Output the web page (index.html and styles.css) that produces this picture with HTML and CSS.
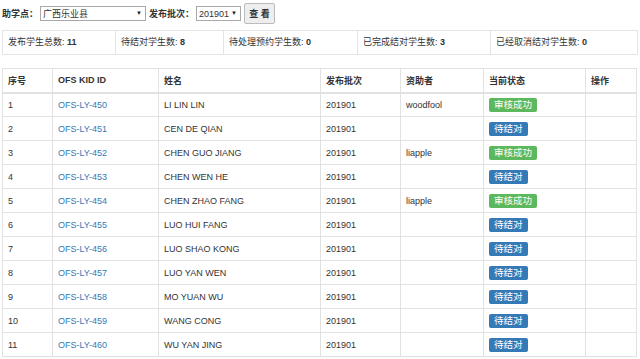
FILE: index.html
```html
<!DOCTYPE html>
<html lang="zh-CN">
<head>
<meta charset="UTF-8">
<meta name="viewport" content="width=device-width, initial-scale=1.0">
<title>学生结对列表</title>
<link rel="stylesheet" href="styles.css">
</head>
<body>

<div class="filter-bar">
    <label class="filter-label">助学点：</label>
    <span class="select-wrap site-select">
        <select class="filter-select">
            <option>广西乐业县</option>
        </select>
    </span>
    <label class="filter-label">发布批次：</label>
    <span class="select-wrap batch-select">
        <select class="filter-select">
            <option>201901</option>
        </select>
    </span>
    <button class="view-button">查 看</button>
</div>

<div class="stats">
    <div class="stat stat-total">发布学生总数: <b>11</b></div>
    <div class="stat stat-waiting">待结对学生数: <b>8</b></div>
    <div class="stat stat-pending">待处理预约学生数: <b>0</b></div>
    <div class="stat stat-done">已完成结对学生数: <b>3</b></div>
    <div class="stat stat-cancel">已经取消结对学生数: <b>0</b></div>
</div>

<table class="kid-table">
    <thead>
        <tr>
            <th class="col-no">序号</th>
            <th class="col-id">OFS KID ID</th>
            <th class="col-name">姓名</th>
            <th class="col-batch">发布批次</th>
            <th class="col-sponsor">资助者</th>
            <th class="col-status">当前状态</th>
            <th class="col-op">操作</th>
        </tr>
    </thead>
    <tbody>
        <tr><td>1</td><td><a href="#">OFS-LY-450</a></td><td>LI LIN LIN</td><td>201901</td><td>woodfool</td><td><span class="label label-success">审核成功</span></td><td></td></tr>
        <tr><td>2</td><td><a href="#">OFS-LY-451</a></td><td>CEN DE QIAN</td><td>201901</td><td></td><td><span class="label label-primary">待结对</span></td><td></td></tr>
        <tr><td>3</td><td><a href="#">OFS-LY-452</a></td><td>CHEN GUO JIANG</td><td>201901</td><td>liapple</td><td><span class="label label-success">审核成功</span></td><td></td></tr>
        <tr><td>4</td><td><a href="#">OFS-LY-453</a></td><td>CHEN WEN HE</td><td>201901</td><td></td><td><span class="label label-primary">待结对</span></td><td></td></tr>
        <tr><td>5</td><td><a href="#">OFS-LY-454</a></td><td>CHEN ZHAO FANG</td><td>201901</td><td>liapple</td><td><span class="label label-success">审核成功</span></td><td></td></tr>
        <tr><td>6</td><td><a href="#">OFS-LY-455</a></td><td>LUO HUI FANG</td><td>201901</td><td></td><td><span class="label label-primary">待结对</span></td><td></td></tr>
        <tr><td>7</td><td><a href="#">OFS-LY-456</a></td><td>LUO SHAO KONG</td><td>201901</td><td></td><td><span class="label label-primary">待结对</span></td><td></td></tr>
        <tr><td>8</td><td><a href="#">OFS-LY-457</a></td><td>LUO YAN WEN</td><td>201901</td><td></td><td><span class="label label-primary">待结对</span></td><td></td></tr>
        <tr><td>9</td><td><a href="#">OFS-LY-458</a></td><td>MO YUAN WU</td><td>201901</td><td></td><td><span class="label label-primary">待结对</span></td><td></td></tr>
        <tr><td>10</td><td><a href="#">OFS-LY-459</a></td><td>WANG CONG</td><td>201901</td><td></td><td><span class="label label-primary">待结对</span></td><td></td></tr>
        <tr><td>11</td><td><a href="#">OFS-LY-460</a></td><td>WU YAN JING</td><td>201901</td><td></td><td><span class="label label-primary">待结对</span></td><td></td></tr>
    </tbody>
</table>

</body>
</html>
```

FILE: styles.css
```css
body {
    margin: 0 2px;
    font-family: "Liberation Sans", "Noto Sans CJK SC", sans-serif;
    font-size: 9px;
    color: #333;
    background-color: #fff;
}

.filter-bar {
    display: flex;
    align-items: center;
    height: 27px;
}

.filter-label {
    font-weight: bold;
    margin-right: 2px;
}

.select-wrap {
    position: relative;
    display: inline-block;
    margin-right: 3px;
}

.select-wrap::after {
    content: "▼";
    position: absolute;
    right: 4px;
    top: 4px;
    font-size: 6px;
    color: #222;
    pointer-events: none;
}

.filter-select {
    display: block;
    width: 100%;
    height: 15px;
    padding: 0 2px;
    font-family: inherit;
    font-size: 9px;
    color: #333;
    background-color: #fff;
    border: 1px solid #a9a9a9;
    border-radius: 0;
    appearance: none;
    -webkit-appearance: none;
    outline: none;
}

.site-select {
    width: 106px;
}

.batch-select {
    width: 45px;
}

.view-button {
    height: 21px;
    width: 31px;
    padding: 0;
    font-family: inherit;
    font-size: 9px;
    font-weight: bold;
    color: #333;
    background-color: #eee;
    border: 1px solid #bbb;
    border-radius: 2px;
}

/* summary counts */
.stats {
    display: flex;
    margin-top: 3px;
    border: 1px solid #e4e4e4;
}

.stat {
    height: 23px;
    line-height: 23px;
    padding-left: 5px;
    border-left: 1px solid #e4e4e4;
    box-sizing: border-box;
}

.stat:first-child {
    border-left: none;
}

.stat-total { width: 112px; }
.stat-waiting { width: 108px; }
.stat-pending { width: 134px; }
.stat-done { width: 133px; }
.stat-cancel { flex: 1; }

/* kid list */
.kid-table {
    margin-top: 13px;
    width: 634px;
    border-collapse: collapse;
    table-layout: fixed;
}

.kid-table th,
.kid-table td {
    height: 24px;
    padding: 0 5px;
    text-align: left;
    border: 1px solid #e2e2e2;
    box-sizing: border-box;
    white-space: nowrap;
}

.kid-table th {
    font-weight: bold;
    border-bottom: 2px solid #e2e2e2;
}

.kid-table a {
    color: #337ab7;
    text-decoration: none;
}

.col-no { width: 50px; }
.col-id { width: 106px; }
.col-name { width: 162px; }
.col-batch { width: 80px; }
.col-sponsor { width: 83px; }
.col-status { width: 102px; }
.col-op { width: 51px; }

.label {
    display: inline-block;
    padding: 1px 5px 2px;
    line-height: 11px;
    font-size: 9.5px;
    color: #fff;
    border-radius: 2px;
}

.label-success {
    background-color: #5cb85c;
}

.label-primary {
    background-color: #337ab7;
}
```
